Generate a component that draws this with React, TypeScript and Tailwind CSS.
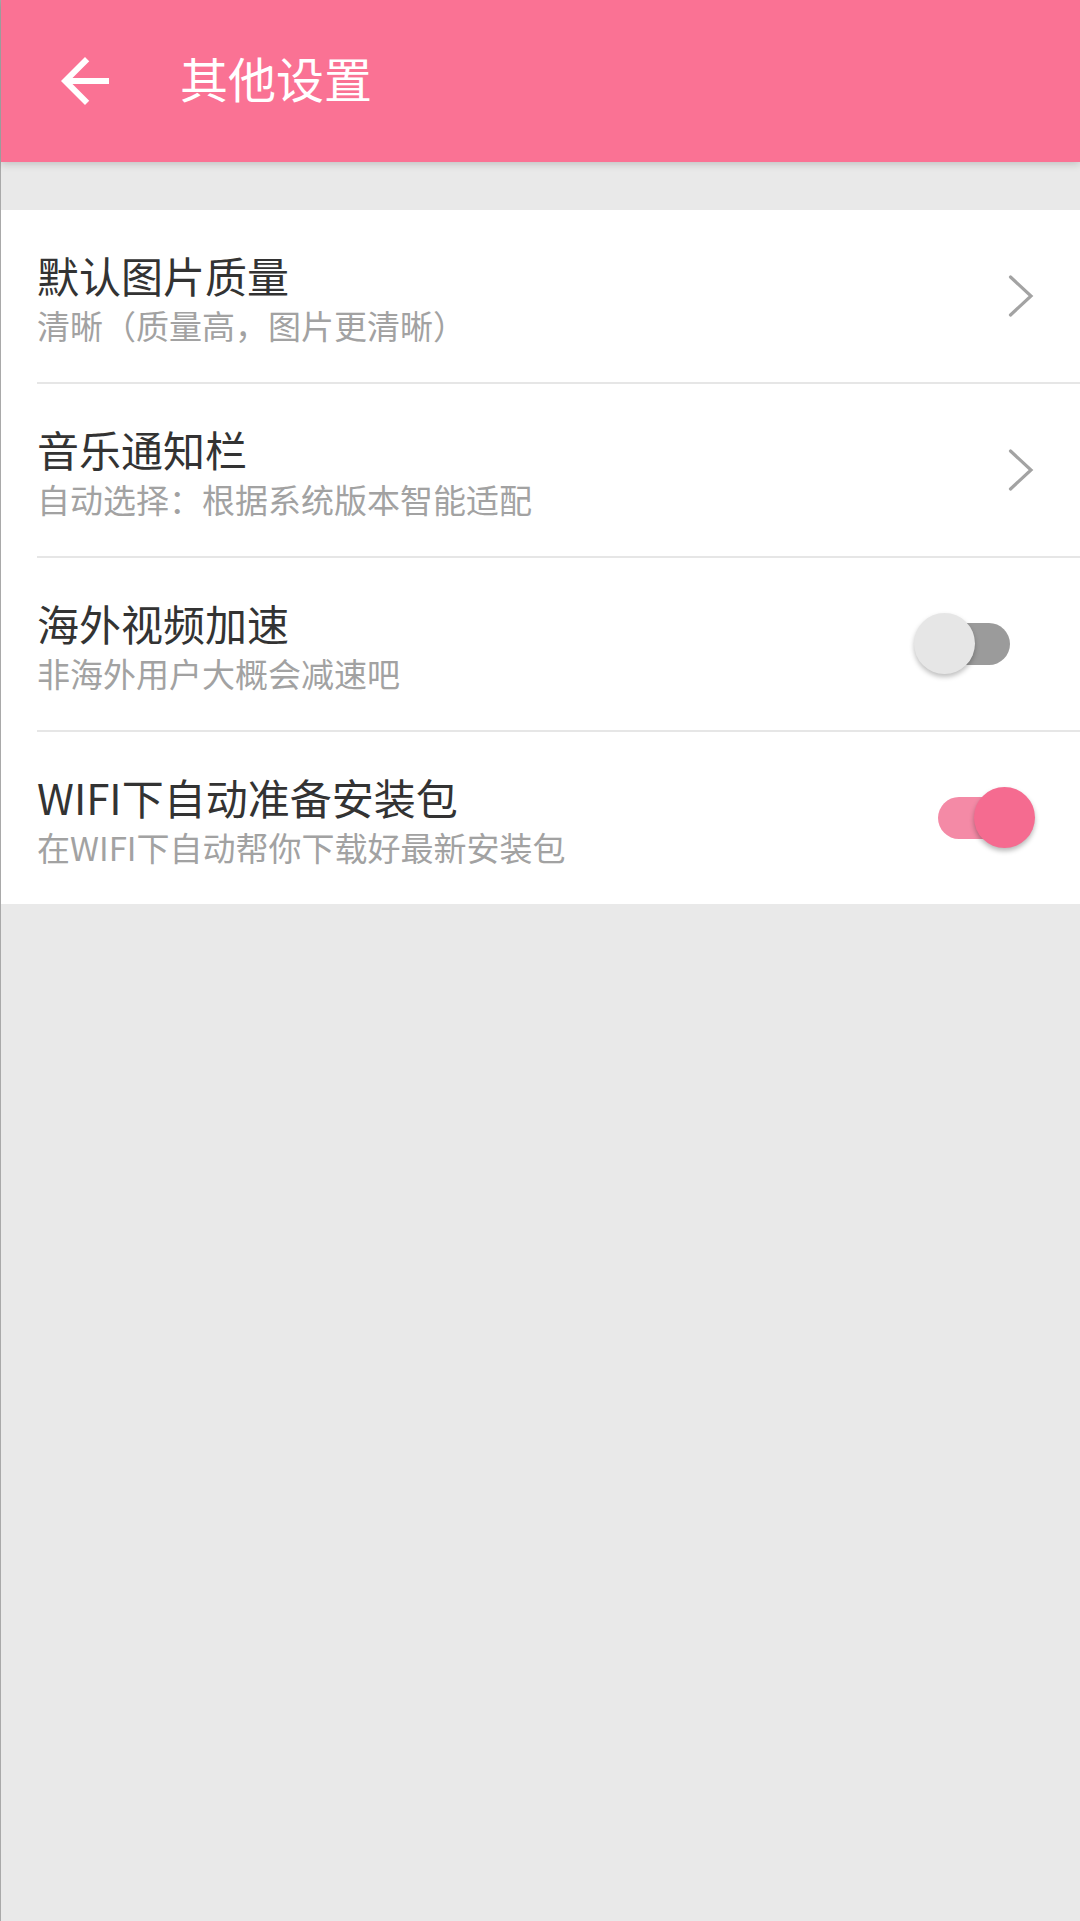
import React from "react";

const font = { fontFamily: '"Noto Sans CJK SC", "Noto Sans", sans-serif' };

function Chevron() {
  return (
    <svg width="26" height="42" viewBox="0 0 26 42" className="mr-[46px] shrink-0">
      <polyline points="2.5,2 23,21 2.5,40" fill="none" stroke="#a3a3a3" strokeWidth="3.2" strokeLinecap="round" strokeLinejoin="miter" />
    </svg>
  );
}

function Switch({ on }: { on: boolean }) {
  if (on) {
    return (
      <div className="relative w-[97px] h-[62px] mr-[45px] shrink-0">
        <div className="absolute left-0 right-[9px] top-[10px] h-[42px] rounded-full bg-[#f48aa6]" />
        <div className="absolute right-0 top-0 w-[61px] h-[61px] rounded-full bg-[#f56b90] shadow-[0_3px_5px_rgba(0,0,0,0.28)]" />
      </div>
    );
  }
  return (
    <div className="relative w-[96px] h-[62px] mr-[70px] shrink-0">
      <div className="absolute left-[8px] right-0 top-[10px] h-[42px] rounded-full bg-[#9b9b9b]" />
      <div className="absolute left-0 top-0 w-[61px] h-[61px] rounded-full bg-[#e6e6e6] shadow-[0_3px_5px_rgba(0,0,0,0.25)]" />
    </div>
  );
}

function Row({ title, sub, right, last }: { title: string; sub: string; right: React.ReactNode; last?: boolean }) {
  return (
    <div className="pl-[36px]">
      <div className="flex items-center h-[172px]">
        <div className="flex-1 flex flex-col pt-[4px]">
          <div className="text-[42px] leading-[48px] text-[#333333]">{title}</div>
          <div className="text-[33px] leading-[40px] mt-[6px] text-[#a2a2a2]">{sub}</div>
        </div>
        {right}
      </div>
      {!last && <div className="h-[2px] bg-[#e6e6e6]" />}
    </div>
  );
}

export default function App() {
  return (
    <div style={font} className="min-h-screen w-full bg-[#e9e9e9] border-l border-[#a9a9a9] flex flex-col">
      <div className="relative z-10 h-[162px] bg-[#fa7294] flex items-center shadow-[0_2px_8px_rgba(0,0,0,0.18)]">
        <svg width="72" height="72" viewBox="0 0 24 24" className="ml-[48px] shrink-0">
          <path d="M20 11H7.83l5.59-5.59L12 4l-8 8 8 8 1.41-1.41L7.83 13H20v-2z" fill="#ffffff" />
        </svg>
        <div className="ml-[59px] pb-[8px] text-[48px] leading-none text-white">其他设置</div>
      </div>
      <div className="h-[48px]" />
      <div className="bg-white">
        <Row title="默认图片质量" sub="清晰（质量高，图片更清晰）" right={<Chevron />} />
        <Row title="音乐通知栏" sub="自动选择：根据系统版本智能适配" right={<Chevron />} />
        <Row title="海外视频加速" sub="非海外用户大概会减速吧" right={<Switch on={false} />} />
        <Row title="WIFI下自动准备安装包" sub="在WIFI下自动帮你下载好最新安装包" right={<Switch on={true} />} last />
      </div>
    </div>
  );
}
